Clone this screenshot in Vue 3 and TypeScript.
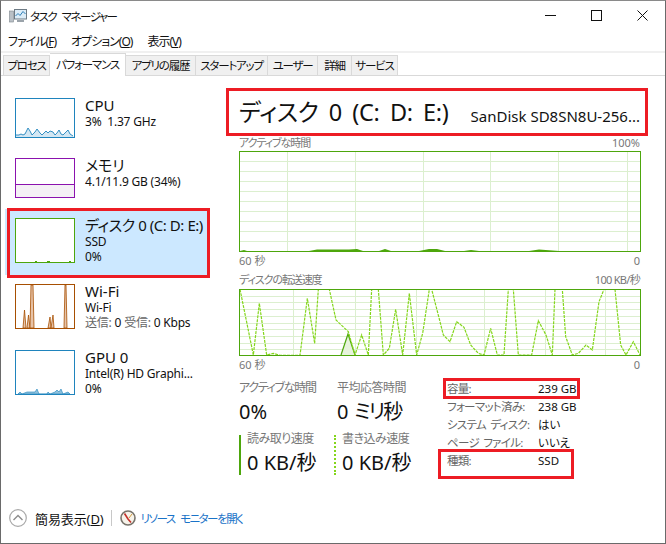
<script setup lang="ts">
const tabs = [
  { label: 'プロセス', w: 47 },
  { label: 'パフォーマンス', w: 76, active: true },
  { label: 'アプリの履歴', w: 70 },
  { label: 'スタートアップ', w: 72 },
  { label: 'ユーザー', w: 50 },
  { label: '詳細', w: 34 },
  { label: 'サービス', w: 46 }
]

const conv6 = (p: number[][]) => p.map(([x, y]) => [230 + x / 3 - 239, 270 + y / 3 - 289])
const conv7 = (p: number[][]) => p.map(([x, y]) => [440 + x / 3 - 239, 270 + y / 3 - 289])
const line = [
  ...conv6([[30,58],[70,255],[88,100],[110,255],[130,250],[150,256],[210,256],[232,85],[254,220],[265,58],[298,58],[318,150],[355,185],[375,255],[395,195],[415,255],[425,58],[445,58],[460,255],[478,235],[497,118],[518,255],[538,70],[560,255],[578,190],[598,58],[605,58]]),
  ...conv7([[0,155],[10,195],[30,215],[50,155],[72,172],[92,225],[115,250],[132,255],[152,175],[172,255],[192,255],[205,58],[220,58],[235,255],[275,255],[295,152],[318,195],[337,255],[345,58],[367,58],[377,200],[397,255],[415,250],[438,225],[457,240],[477,95],[492,58],[525,58],[542,225],[558,255],[580,215],[600,255]])
]
const transferPts = line.map((p) => p.join(',')).join(' ')

const range = (n: number, f: (i: number) => number) => Array.from({ length: n }, (_, i) => f(i))
const rows1 = range(9, (i) => 10 * (i + 1))
const cols1 = [48, 116, 184, 251, 319, 388]
const rows2 = range(9, (i) => 6.7 * (i + 1))
const cols2 = [54, 116, 177, 245, 306, 366]

const cpuLine = '1,37 4,37 6,36 8,37 10,36 13,30 15,33 17,37 20,34 22,31 25,35 27,37 29,35 31,33 33,35 35,33 38,34 40,37 42,35 44,32 46,36 48,37 50,35 53,32 55,36 58,38'

const details = [
  { k: '容量:', v: '239 GB' },
  { k: 'フォーマット済み:', v: '238 GB' },
  { k: 'システム ディスク:', v: 'はい' },
  { k: 'ページ ファイル:', v: 'いいえ' },
  { k: '種類:', v: 'SSD' }
]
</script>

<template>
  <div class="win">
    <header class="titlebar">
      <svg class="appicon" width="18" height="16" viewBox="0 0 18 16">
        <rect x="0.5" y="3" width="4" height="11" fill="#b9c0c6" stroke="#7d868d" stroke-width="0.6" />
        <rect x="5.5" y="1.5" width="12" height="9.5" fill="#dcecf7" stroke="#6d7a84" />
        <path d="M6.5 8 9 5.5 11 7.5 14 3.5 16.5 6" fill="none" stroke="#2d7fb8" />
        <rect x="8" y="12" width="7" height="2" fill="#9aa3aa" />
      </svg>
      <span class="apptitle">タスク マネージャー</span>
      <div class="winbtns">
        <svg width="11" height="11" viewBox="0 0 11 11"><path d="M0 5.5h11" stroke="#111" /></svg>
        <svg width="11" height="11" viewBox="0 0 11 11"><rect x=".5" y=".5" width="10" height="10" fill="none" stroke="#111" /></svg>
        <svg width="11" height="11" viewBox="0 0 11 11"><path d="M.5.5l10 10M10.5.5l-10 10" stroke="#111" /></svg>
      </div>
    </header>

    <nav class="menubar">
      <span>ファイル(<u>F</u>)</span>
      <span>オプション(<u>O</u>)</span>
      <span>表示(<u>V</u>)</span>
    </nav>

    <div class="tabs">
      <div
        v-for="t in tabs"
        :key="t.label"
        class="tab"
        :class="{ active: t.active }"
        :style="{ width: t.w + 'px' }"
      >{{ t.label }}</div>
    </div>

    <div class="body">
      <aside class="sidebar">
        <div class="row short">
          <svg class="thumb" width="60" height="40" viewBox="0 0 60 40">
            <polygon :points="`1,39 ${cpuLine} 59,39`" fill="#d3e7f3" />
            <polyline :points="cpuLine" fill="none" stroke="#1f84bd" stroke-width="0.9" />
            <rect x=".5" y=".5" width="59" height="39" fill="none" stroke="#1f84bd" />
          </svg>
          <div class="txt">
            <div class="t">CPU</div>
            <div class="s">3%&nbsp; 1.37 GHz</div>
          </div>
        </div>
        <div class="row short">
          <svg class="thumb" width="60" height="40" viewBox="0 0 60 40">
            <rect x="1" y="26" width="58" height="13" fill="#f4f0f5" />
            <path d="M0 26.5h60" stroke="#8b12ae" />
            <rect x=".5" y=".5" width="59" height="39" fill="none" stroke="#8b12ae" />
          </svg>
          <div class="txt">
            <div class="t">メモリ</div>
            <div class="s">4.1/11.9 GB (34%)</div>
          </div>
        </div>
        <div class="row sel">
          <svg class="thumb" width="60" height="45" viewBox="0 0 60 45">
            <rect x=".5" y=".5" width="59" height="44" fill="#fff" stroke="#4da60c" />
            <path d="M20 43.5h2M32 43.5h3M54 43.5h2" stroke="#4da60c" />
          </svg>
          <div class="txt">
            <div class="t">ディスク 0 (C: D: E:)</div>
            <div class="s">SSD</div>
            <div class="s">0%</div>
          </div>
        </div>
        <div class="row">
          <svg class="thumb" width="60" height="45" viewBox="0 0 60 45">
            <g fill="#e7c3a8" stroke="#a74f01" stroke-width="0.8">
              <polygon points="8,44 9.5,26 11,44" />
              <polygon points="12,44 13.5,31 15,44" />
              <polygon points="15,44 16,1 18,1 19,44" />
              <polygon points="33,44 35,33 36,44" />
              <polygon points="36,44 38,31 39,44" />
              <polygon points="49,44 50,1 51,1 52,44" />
            </g>
            <rect x=".5" y=".5" width="59" height="44" fill="none" stroke="#a74f01" />
          </svg>
          <div class="txt">
            <div class="t">Wi-Fi</div>
            <div class="s">Wi-Fi</div>
            <div class="s"><span class="muted">送信:</span> 0 <span class="muted">受信:</span> 0 Kbps</div>
          </div>
        </div>
        <div class="row">
          <svg class="thumb" width="60" height="45" viewBox="0 0 60 45">
            <polygon points="3,44 5,42 7,44 12,42 17,42 20,42 22,39 24,44 32,44 33,42 35,44 40,42 42,40 44,42 46,39 48,44 53,42 55,44" fill="#8fc0dc" stroke="#1f84bd" stroke-width="0.6" />
            <rect x=".5" y=".5" width="59" height="44" fill="none" stroke="#1f84bd" />
          </svg>
          <div class="txt">
            <div class="t">GPU 0</div>
            <div class="s">Intel(R) HD Graphi...</div>
            <div class="s">0%</div>
          </div>
        </div>
      </aside>

      <main class="main">
        <div class="heading">
          <span class="h1">ディスク 0 (C: D: E:)</span>
          <span class="h2">SanDisk SD8SN8U-256...</span>
        </div>

        <div class="cap"><span class="kana">アクティブな時間</span><span>100%</span></div>
        <svg class="chart" width="402" height="101" viewBox="0 0 402 101">
          <g stroke="#dcefcf">
            <path v-for="y in rows1" :key="y" :d="`M1 ${y + 0.5}H401`" />
            <path v-for="x in cols1" :key="x" :d="`M${x + 0.5} 1V100`" />
          </g>
          <path d="M1 100 5 99 8 100H70L78 98.5H110L118 98 124 100H140L146 98 152 100H180L190 98 198 98 206 100H225L232 99 240 100H290L300 98.5 320 100H401Z" fill="#4da60c" />
          <rect x="0.5" y="0.5" width="401" height="100" fill="none" stroke="#4da60c" />
        </svg>
        <div class="cap axis"><span>60 秒</span><span>0</span></div>

        <div class="cap second"><span class="kana">ディスクの転送速度</span><span class="rate">100 KB/秒</span></div>
        <svg class="chart" width="402" height="67" viewBox="0 0 402 67">
          <g stroke="#dcefcf">
            <path v-for="y in rows2" :key="y" :d="`M1 ${Math.round(y) + 0.5}H401`" />
            <path v-for="x in cols2" :key="x" :d="`M${x + 0.5} 1V66`" />
          </g>
          <polygon points="102,66 109,45 116,66" fill="#e7f3dc" />
          <polyline points="102,66 109,45 116,66" fill="none" stroke="#4da60c" stroke-width="1.2" />
          <polyline :points="transferPts" fill="none" stroke="#84d61c" stroke-width="1.2" stroke-dasharray="3 1" />
          <rect x="0.5" y="0.5" width="401" height="66" fill="none" stroke="#4da60c" />
        </svg>
        <div class="cap axis"><span>60 秒</span><span>0</span></div>

        <div class="stats">
          <div class="cols">
            <div class="statrow">
              <div class="stat first">
                <div class="lab tight">アクティブな時間</div>
                <div class="val">0%</div>
              </div>
              <div class="stat inset">
                <div class="lab">平均応答時間</div>
                <div class="val tight">0 ミリ秒</div>
              </div>
            </div>
            <div class="statrow">
              <div class="stat first bar">
                <div class="lab">読み取り速度</div>
                <div class="val">0 KB/秒</div>
              </div>
              <div class="stat bar dots">
                <div class="lab">書き込み速度</div>
                <div class="val">0 KB/秒</div>
              </div>
            </div>
          </div>
          <dl class="details">
            <div v-for="d in details" :key="d.k" class="drow">
              <dt>{{ d.k }}</dt>
              <dd>{{ d.v }}</dd>
            </div>
          </dl>
        </div>
      </main>
    </div>

    <footer class="footer">
      <svg width="18" height="18" viewBox="0 0 18 18">
        <circle cx="9" cy="9" r="8.3" fill="#fff" stroke="#a8a8a8" stroke-width="1.2" />
        <path d="M4.5 11 9 6.5 13.5 11" fill="none" stroke="#8c8c8c" stroke-width="1.4" />
      </svg>
      <span class="less">簡易表示(<u>D</u>)</span>
      <span class="sep"></span>
      <svg width="16" height="16" viewBox="0 0 16 16">
        <circle cx="8" cy="8" r="7" fill="#f7f3ea" stroke="#77736b" stroke-width="1.6" />
        <path d="M4.5 3.5 8 9l3 3.5" fill="none" stroke="#c4312b" stroke-width="1.6" />
        <path d="M12 4 9 8" stroke="#d09a3a" stroke-width="1" />
      </svg>
      <span class="link">リソース モニターを開く</span>
    </footer>

    <!-- Red annotation frames drawn over the screenshot -->
    <div class="mark m1"></div>
    <div class="mark m2"></div>
    <div class="mark m3"></div>
    <div class="mark m4"></div>
  </div>
</template>

<style scoped>
.win {
  position: relative;
  width: 666px;
  height: 544px;
  box-sizing: border-box;
  background: #fff;
  border: 1px solid #6a6a6a;
  border-top-color: #8a8a8a;
  font-family: "Noto Sans", "Noto Sans CJK JP", sans-serif;
  font-feature-settings: "palt";
  color: #111;
  overflow: hidden;
  display: flex;
  flex-direction: column;
}
.titlebar {
  height: 30px;
  display: flex;
  align-items: center;
  padding-left: 8px;
  flex: none;
}
.appicon { margin-right: 3px; }
.apptitle { font-size: 11.5px; letter-spacing: -1.5px; word-spacing: 4px; }
.winbtns {
  margin-left: auto;
  display: flex;
  gap: 35px;
  margin-right: 17px;
  margin-top: -1px;
}
.winbtns svg { display: block; }
.menubar {
  height: 20px;
  display: flex;
  align-items: center;
  gap: 15px;
  padding-left: 7px;
  font-size: 12px;
  letter-spacing: -1px;
  border-bottom: 2px solid #f0f0f0;
  box-sizing: content-box;
  flex: none;
}
.tabs {
  height: 22px;
  display: flex;
  align-items: flex-end;
  padding-left: 2px;
  border-bottom: 1px solid #d9d9d9;
  flex: none;
}
.tab {
  height: 20px;
  box-sizing: border-box;
  background: #f0f0f0;
  border: 1px solid #d9d9d9;
  border-left-width: 0;
  border-bottom: 0;
  font-size: 11.5px;
  letter-spacing: -1.2px;
  line-height: 19px;
  text-align: center;
  white-space: nowrap;
}
.tab:first-child { border-left-width: 1px; }
.tab.active {
  height: 23px;
  margin-bottom: -1px;
  background: #fff;
  position: relative;
  line-height: 22px;
}
.body {
  flex: 1;
  display: flex;
  min-height: 0;
}
.sidebar {
  width: 225px;
  flex: none;
  padding-top: 13px;
  box-sizing: border-box;
}
.row {
  height: 66px;
  box-sizing: border-box;
  width: 205px;
  margin-left: 4px;
  padding: 9px 0 0 10px;
  display: flex;
  gap: 10px;
}
.row.short { height: 60px; }
.row.sel { background: #cce8ff; }
.thumb {
  flex: none;
  display: block;
}
.txt { margin-top: -2px; white-space: nowrap; }
.t { font-size: 15px; line-height: 18px; }
.sel .t { letter-spacing: -0.45px; }
.s { font-size: 12px; line-height: 15px; letter-spacing: -0.2px; }
.muted { color: #666; }
.main {
  width: 402px;
  flex: none;
  margin-left: 13px;
}
.heading {
  height: 59px;
  display: flex;
  align-items: center;
  justify-content: space-between;
  padding-top: 10px;
  box-sizing: border-box;
  padding-right: 1px;
  white-space: nowrap;
}
.h1 { font-size: 23.5px; word-spacing: 4.5px; letter-spacing: -0.3px; }
.h2 { font-size: 15px; margin-top: 10px; }
.cap {
  display: flex;
  justify-content: space-between;
  font-size: 11px;
  line-height: 16px;
  color: #777;
  height: 16px;
  padding-right: 1px;
}
.cap .kana { letter-spacing: -1.1px; }
.cap .rate { letter-spacing: -0.7px; }
.cap.second { margin-top: 3px; height: 17px; }
.cap.axis { margin-top: 1px; }
.chart { display: block; }
.stats {
  display: flex;
  margin-top: 7px;
}
.cols { width: 204px; flex: none; }
.statrow { display: flex; height: 55px; }
.stat.first { width: 95px; flex: none; }
.stat.inset { padding-left: 3px; }
.lab { font-size: 12px; line-height: 16px; color: #777; white-space: nowrap; letter-spacing: -0.5px; }
.lab.tight { letter-spacing: -1.3px; }
.val { font-size: 20px; line-height: 30px; margin-top: 1px; white-space: nowrap; }
.val.tight { letter-spacing: -1.8px; word-spacing: 4px; }
.bar { padding-left: 6px; border-left: 2px solid #4da60c; box-sizing: border-box; height: 40px; }
.bar.dots { border-left: 2px dotted #84d61c; }
.bar .lab { margin-top: -4px; }
.details {
  margin: 0 0 0 4px;
  font-size: 11.5px;
  line-height: 18px;
}
.drow { display: flex; height: 18px; white-space: nowrap; }
dt { width: 91px; flex: none; color: #666; letter-spacing: -0.7px; word-spacing: 2px; }
dd { margin: 0; color: #111; }
.footer {
  height: 50px;
  flex: none;
  display: flex;
  align-items: center;
  padding-left: 8px;
  margin-top: auto;
  font-size: 13px;
}
.less { margin-left: 8px; letter-spacing: -0.1px; }
.sep { width: 1px; height: 16px; background: #c8c8c8; margin: 0 8px 0 7px; }
.link { margin-left: 5px; color: #1a73c8; font-size: 11.5px; letter-spacing: -1.5px; word-spacing: 4px; }
.mark {
  position: absolute;
  box-sizing: border-box;
  border: 3px solid #ed1c24;
  pointer-events: none;
}
.m1 { left: 225px; top: 87px; width: 422px; height: 48px; }
.m2 { left: 6px; top: 207px; width: 203px; height: 70px; }
.m3 { left: 442px; top: 377px; width: 137px; height: 21px; }
.m4 { left: 437px; top: 448px; width: 136px; height: 30px; }
</style>
